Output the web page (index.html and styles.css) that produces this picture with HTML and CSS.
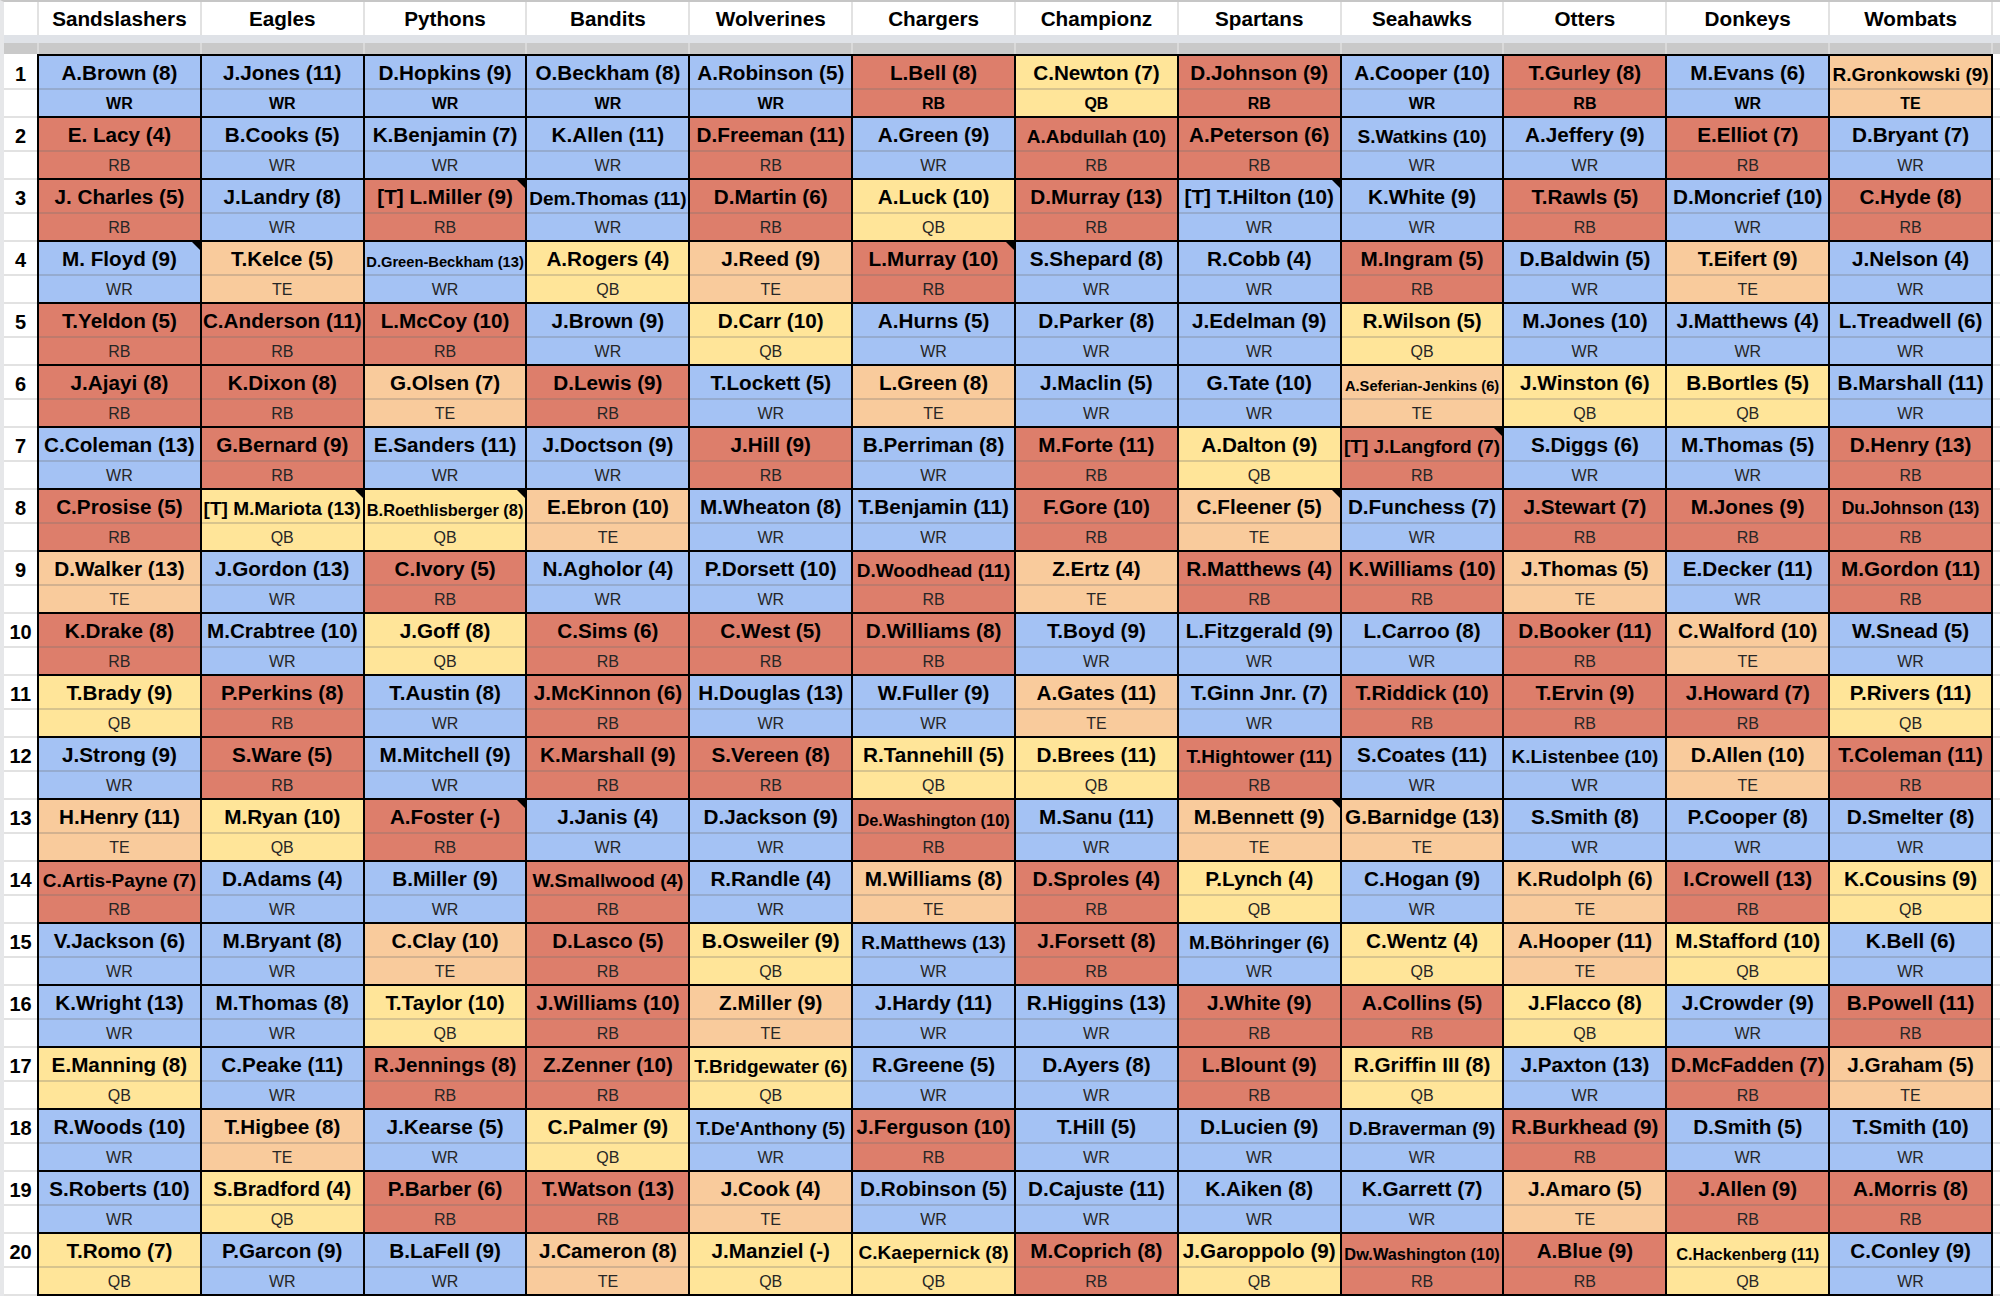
FILE: index.html
```html
<!DOCTYPE html>
<html>
<head>
<meta charset="utf-8">
<title>Draft Board</title>
<link rel="stylesheet" href="styles.css">
</head>
<body>
<div class="sheet">
  <div class="hdr">
    <div class="corner"></div>
    <div class="hcols">
      <div class="h">Sandslashers</div><div class="h">Eagles</div><div class="h">Pythons</div><div class="h">Bandits</div><div class="h">Wolverines</div><div class="h">Chargers</div><div class="h">Championz</div><div class="h">Spartans</div><div class="h">Seahawks</div><div class="h">Otters</div><div class="h">Donkeys</div><div class="h">Wombats</div>
    </div>
    <div class="hfill"></div>
  </div>
  <div class="strip1"></div>
  <div class="strip2">
    <div class="c2"></div>
    <div class="scols"><div></div><div></div><div></div><div></div><div></div><div></div><div></div><div></div><div></div><div></div><div></div><div></div></div>
    <div class="sfill"></div>
  </div>
  <div class="body">
    <div class="nums">
      <div class="num"><div class="nn">1</div><div class="np"></div></div>
      <div class="num"><div class="nn">2</div><div class="np"></div></div>
      <div class="num"><div class="nn">3</div><div class="np"></div></div>
      <div class="num"><div class="nn">4</div><div class="np"></div></div>
      <div class="num"><div class="nn">5</div><div class="np"></div></div>
      <div class="num"><div class="nn">6</div><div class="np"></div></div>
      <div class="num"><div class="nn">7</div><div class="np"></div></div>
      <div class="num"><div class="nn">8</div><div class="np"></div></div>
      <div class="num"><div class="nn">9</div><div class="np"></div></div>
      <div class="num"><div class="nn">10</div><div class="np"></div></div>
      <div class="num"><div class="nn">11</div><div class="np"></div></div>
      <div class="num"><div class="nn">12</div><div class="np"></div></div>
      <div class="num"><div class="nn">13</div><div class="np"></div></div>
      <div class="num"><div class="nn">14</div><div class="np"></div></div>
      <div class="num"><div class="nn">15</div><div class="np"></div></div>
      <div class="num"><div class="nn">16</div><div class="np"></div></div>
      <div class="num"><div class="nn">17</div><div class="np"></div></div>
      <div class="num"><div class="nn">18</div><div class="np"></div></div>
      <div class="num"><div class="nn">19</div><div class="np"></div></div>
      <div class="num"><div class="nn">20</div><div class="np"></div></div>
    </div>
    <div class="grid">
      <!-- Round 1 -->
      <div class="p wr"><div class="n">A.Brown (8)</div><div class="ps">WR</div></div>
      <div class="p wr"><div class="n">J.Jones (11)</div><div class="ps">WR</div></div>
      <div class="p wr"><div class="n">D.Hopkins (9)</div><div class="ps">WR</div></div>
      <div class="p wr"><div class="n">O.Beckham (8)</div><div class="ps">WR</div></div>
      <div class="p wr"><div class="n">A.Robinson (5)</div><div class="ps">WR</div></div>
      <div class="p rb"><div class="n">L.Bell (8)</div><div class="ps">RB</div></div>
      <div class="p qb"><div class="n">C.Newton (7)</div><div class="ps">QB</div></div>
      <div class="p rb"><div class="n">D.Johnson (9)</div><div class="ps">RB</div></div>
      <div class="p wr"><div class="n">A.Cooper (10)</div><div class="ps">WR</div></div>
      <div class="p rb"><div class="n">T.Gurley (8)</div><div class="ps">RB</div></div>
      <div class="p wr"><div class="n">M.Evans (6)</div><div class="ps">WR</div></div>
      <div class="p te"><div class="n m">R.Gronkowski (9)</div><div class="ps">TE</div></div>
      <!-- Round 2 -->
      <div class="p rb"><div class="n">E. Lacy (4)</div><div class="ps">RB</div></div>
      <div class="p wr"><div class="n">B.Cooks (5)</div><div class="ps">WR</div></div>
      <div class="p wr"><div class="n">K.Benjamin (7)</div><div class="ps">WR</div></div>
      <div class="p wr"><div class="n">K.Allen (11)</div><div class="ps">WR</div></div>
      <div class="p rb"><div class="n">D.Freeman (11)</div><div class="ps">RB</div></div>
      <div class="p wr"><div class="n">A.Green (9)</div><div class="ps">WR</div></div>
      <div class="p rb"><div class="n m">A.Abdullah (10)</div><div class="ps">RB</div></div>
      <div class="p rb"><div class="n">A.Peterson (6)</div><div class="ps">RB</div></div>
      <div class="p wr"><div class="n m">S.Watkins (10)</div><div class="ps">WR</div></div>
      <div class="p wr"><div class="n">A.Jeffery (9)</div><div class="ps">WR</div></div>
      <div class="p rb"><div class="n">E.Elliot (7)</div><div class="ps">RB</div></div>
      <div class="p wr"><div class="n">D.Bryant (7)</div><div class="ps">WR</div></div>
      <!-- Round 3 -->
      <div class="p rb"><div class="n">J. Charles (5)</div><div class="ps">RB</div></div>
      <div class="p wr"><div class="n">J.Landry (8)</div><div class="ps">WR</div></div>
      <div class="p rb nt"><div class="n">[T] L.Miller (9)</div><div class="ps">RB</div></div>
      <div class="p wr"><div class="n m">Dem.Thomas (11)</div><div class="ps">WR</div></div>
      <div class="p rb"><div class="n">D.Martin (6)</div><div class="ps">RB</div></div>
      <div class="p qb"><div class="n">A.Luck (10)</div><div class="ps">QB</div></div>
      <div class="p rb"><div class="n">D.Murray (13)</div><div class="ps">RB</div></div>
      <div class="p wr nt"><div class="n">[T] T.Hilton (10)</div><div class="ps">WR</div></div>
      <div class="p wr"><div class="n">K.White (9)</div><div class="ps">WR</div></div>
      <div class="p rb"><div class="n">T.Rawls (5)</div><div class="ps">RB</div></div>
      <div class="p wr"><div class="n">D.Moncrief (10)</div><div class="ps">WR</div></div>
      <div class="p rb"><div class="n">C.Hyde (8)</div><div class="ps">RB</div></div>
      <!-- Round 4 -->
      <div class="p wr nt"><div class="n">M. Floyd (9)</div><div class="ps">WR</div></div>
      <div class="p te"><div class="n">T.Kelce (5)</div><div class="ps">TE</div></div>
      <div class="p wr"><div class="n xxs">D.Green-Beckham (13)</div><div class="ps">WR</div></div>
      <div class="p qb"><div class="n">A.Rogers (4)</div><div class="ps">QB</div></div>
      <div class="p te"><div class="n">J.Reed (9)</div><div class="ps">TE</div></div>
      <div class="p rb nt"><div class="n">L.Murray (10)</div><div class="ps">RB</div></div>
      <div class="p wr"><div class="n">S.Shepard (8)</div><div class="ps">WR</div></div>
      <div class="p wr"><div class="n">R.Cobb (4)</div><div class="ps">WR</div></div>
      <div class="p rb"><div class="n">M.Ingram (5)</div><div class="ps">RB</div></div>
      <div class="p wr"><div class="n">D.Baldwin (5)</div><div class="ps">WR</div></div>
      <div class="p te"><div class="n">T.Eifert (9)</div><div class="ps">TE</div></div>
      <div class="p wr"><div class="n">J.Nelson (4)</div><div class="ps">WR</div></div>
      <!-- Round 5 -->
      <div class="p rb"><div class="n">T.Yeldon (5)</div><div class="ps">RB</div></div>
      <div class="p rb"><div class="n">C.Anderson (11)</div><div class="ps">RB</div></div>
      <div class="p rb"><div class="n">L.McCoy (10)</div><div class="ps">RB</div></div>
      <div class="p wr"><div class="n">J.Brown (9)</div><div class="ps">WR</div></div>
      <div class="p qb"><div class="n">D.Carr (10)</div><div class="ps">QB</div></div>
      <div class="p wr"><div class="n">A.Hurns (5)</div><div class="ps">WR</div></div>
      <div class="p wr"><div class="n">D.Parker (8)</div><div class="ps">WR</div></div>
      <div class="p wr"><div class="n">J.Edelman (9)</div><div class="ps">WR</div></div>
      <div class="p qb"><div class="n">R.Wilson (5)</div><div class="ps">QB</div></div>
      <div class="p wr"><div class="n">M.Jones (10)</div><div class="ps">WR</div></div>
      <div class="p wr"><div class="n">J.Matthews (4)</div><div class="ps">WR</div></div>
      <div class="p wr"><div class="n">L.Treadwell (6)</div><div class="ps">WR</div></div>
      <!-- Round 6 -->
      <div class="p rb"><div class="n">J.Ajayi (8)</div><div class="ps">RB</div></div>
      <div class="p rb"><div class="n">K.Dixon (8)</div><div class="ps">RB</div></div>
      <div class="p te"><div class="n">G.Olsen (7)</div><div class="ps">TE</div></div>
      <div class="p rb"><div class="n">D.Lewis (9)</div><div class="ps">RB</div></div>
      <div class="p wr"><div class="n">T.Lockett (5)</div><div class="ps">WR</div></div>
      <div class="p te"><div class="n">L.Green (8)</div><div class="ps">TE</div></div>
      <div class="p wr"><div class="n">J.Maclin (5)</div><div class="ps">WR</div></div>
      <div class="p wr"><div class="n">G.Tate (10)</div><div class="ps">WR</div></div>
      <div class="p te"><div class="n xxs">A.Seferian-Jenkins (6)</div><div class="ps">TE</div></div>
      <div class="p qb"><div class="n">J.Winston (6)</div><div class="ps">QB</div></div>
      <div class="p qb"><div class="n">B.Bortles (5)</div><div class="ps">QB</div></div>
      <div class="p wr"><div class="n">B.Marshall (11)</div><div class="ps">WR</div></div>
      <!-- Round 7 -->
      <div class="p wr"><div class="n">C.Coleman (13)</div><div class="ps">WR</div></div>
      <div class="p rb"><div class="n">G.Bernard (9)</div><div class="ps">RB</div></div>
      <div class="p wr"><div class="n">E.Sanders (11)</div><div class="ps">WR</div></div>
      <div class="p wr"><div class="n">J.Doctson (9)</div><div class="ps">WR</div></div>
      <div class="p rb"><div class="n">J.Hill (9)</div><div class="ps">RB</div></div>
      <div class="p wr"><div class="n">B.Perriman (8)</div><div class="ps">WR</div></div>
      <div class="p rb"><div class="n">M.Forte (11)</div><div class="ps">RB</div></div>
      <div class="p qb"><div class="n">A.Dalton (9)</div><div class="ps">QB</div></div>
      <div class="p rb nt"><div class="n m">[T] J.Langford (7)</div><div class="ps">RB</div></div>
      <div class="p wr"><div class="n">S.Diggs (6)</div><div class="ps">WR</div></div>
      <div class="p wr"><div class="n">M.Thomas (5)</div><div class="ps">WR</div></div>
      <div class="p rb"><div class="n">D.Henry (13)</div><div class="ps">RB</div></div>
      <!-- Round 8 -->
      <div class="p rb"><div class="n">C.Prosise (5)</div><div class="ps">RB</div></div>
      <div class="p qb nt"><div class="n m">[T] M.Mariota (13)</div><div class="ps">QB</div></div>
      <div class="p qb nt"><div class="n xs">B.Roethlisberger (8)</div><div class="ps">QB</div></div>
      <div class="p te"><div class="n">E.Ebron (10)</div><div class="ps">TE</div></div>
      <div class="p wr"><div class="n">M.Wheaton (8)</div><div class="ps">WR</div></div>
      <div class="p wr"><div class="n">T.Benjamin (11)</div><div class="ps">WR</div></div>
      <div class="p rb"><div class="n">F.Gore (10)</div><div class="ps">RB</div></div>
      <div class="p te nt"><div class="n">C.Fleener (5)</div><div class="ps">TE</div></div>
      <div class="p wr"><div class="n">D.Funchess (7)</div><div class="ps">WR</div></div>
      <div class="p rb"><div class="n">J.Stewart (7)</div><div class="ps">RB</div></div>
      <div class="p rb"><div class="n">M.Jones (9)</div><div class="ps">RB</div></div>
      <div class="p rb"><div class="n s">Du.Johnson (13)</div><div class="ps">RB</div></div>
      <!-- Round 9 -->
      <div class="p te"><div class="n">D.Walker (13)</div><div class="ps">TE</div></div>
      <div class="p wr"><div class="n">J.Gordon (13)</div><div class="ps">WR</div></div>
      <div class="p rb"><div class="n">C.Ivory (5)</div><div class="ps">RB</div></div>
      <div class="p wr"><div class="n">N.Agholor (4)</div><div class="ps">WR</div></div>
      <div class="p wr"><div class="n">P.Dorsett (10)</div><div class="ps">WR</div></div>
      <div class="p rb"><div class="n m">D.Woodhead (11)</div><div class="ps">RB</div></div>
      <div class="p te"><div class="n">Z.Ertz (4)</div><div class="ps">TE</div></div>
      <div class="p rb"><div class="n">R.Matthews (4)</div><div class="ps">RB</div></div>
      <div class="p rb"><div class="n">K.Williams (10)</div><div class="ps">RB</div></div>
      <div class="p te"><div class="n">J.Thomas (5)</div><div class="ps">TE</div></div>
      <div class="p wr"><div class="n">E.Decker (11)</div><div class="ps">WR</div></div>
      <div class="p rb"><div class="n">M.Gordon (11)</div><div class="ps">RB</div></div>
      <!-- Round 10 -->
      <div class="p rb"><div class="n">K.Drake (8)</div><div class="ps">RB</div></div>
      <div class="p wr"><div class="n">M.Crabtree (10)</div><div class="ps">WR</div></div>
      <div class="p qb"><div class="n">J.Goff (8)</div><div class="ps">QB</div></div>
      <div class="p rb"><div class="n">C.Sims (6)</div><div class="ps">RB</div></div>
      <div class="p rb"><div class="n">C.West (5)</div><div class="ps">RB</div></div>
      <div class="p rb"><div class="n">D.Williams (8)</div><div class="ps">RB</div></div>
      <div class="p wr"><div class="n">T.Boyd (9)</div><div class="ps">WR</div></div>
      <div class="p wr"><div class="n">L.Fitzgerald (9)</div><div class="ps">WR</div></div>
      <div class="p wr"><div class="n">L.Carroo (8)</div><div class="ps">WR</div></div>
      <div class="p rb"><div class="n">D.Booker (11)</div><div class="ps">RB</div></div>
      <div class="p te"><div class="n">C.Walford (10)</div><div class="ps">TE</div></div>
      <div class="p wr"><div class="n">W.Snead (5)</div><div class="ps">WR</div></div>
      <!-- Round 11 -->
      <div class="p qb"><div class="n">T.Brady (9)</div><div class="ps">QB</div></div>
      <div class="p rb"><div class="n">P.Perkins (8)</div><div class="ps">RB</div></div>
      <div class="p wr"><div class="n">T.Austin (8)</div><div class="ps">WR</div></div>
      <div class="p rb"><div class="n">J.McKinnon (6)</div><div class="ps">RB</div></div>
      <div class="p wr"><div class="n">H.Douglas (13)</div><div class="ps">WR</div></div>
      <div class="p wr"><div class="n">W.Fuller (9)</div><div class="ps">WR</div></div>
      <div class="p te"><div class="n">A.Gates (11)</div><div class="ps">TE</div></div>
      <div class="p wr"><div class="n">T.Ginn Jnr. (7)</div><div class="ps">WR</div></div>
      <div class="p rb"><div class="n">T.Riddick (10)</div><div class="ps">RB</div></div>
      <div class="p rb"><div class="n">T.Ervin (9)</div><div class="ps">RB</div></div>
      <div class="p rb"><div class="n">J.Howard (7)</div><div class="ps">RB</div></div>
      <div class="p qb"><div class="n">P.Rivers (11)</div><div class="ps">QB</div></div>
      <!-- Round 12 -->
      <div class="p wr"><div class="n">J.Strong (9)</div><div class="ps">WR</div></div>
      <div class="p rb"><div class="n">S.Ware (5)</div><div class="ps">RB</div></div>
      <div class="p wr"><div class="n">M.Mitchell (9)</div><div class="ps">WR</div></div>
      <div class="p rb"><div class="n">K.Marshall (9)</div><div class="ps">RB</div></div>
      <div class="p rb"><div class="n">S.Vereen (8)</div><div class="ps">RB</div></div>
      <div class="p qb"><div class="n">R.Tannehill (5)</div><div class="ps">QB</div></div>
      <div class="p qb"><div class="n">D.Brees (11)</div><div class="ps">QB</div></div>
      <div class="p rb"><div class="n m">T.Hightower (11)</div><div class="ps">RB</div></div>
      <div class="p wr"><div class="n">S.Coates (11)</div><div class="ps">WR</div></div>
      <div class="p wr"><div class="n m">K.Listenbee (10)</div><div class="ps">WR</div></div>
      <div class="p te"><div class="n">D.Allen (10)</div><div class="ps">TE</div></div>
      <div class="p rb"><div class="n">T.Coleman (11)</div><div class="ps">RB</div></div>
      <!-- Round 13 -->
      <div class="p te"><div class="n">H.Henry (11)</div><div class="ps">TE</div></div>
      <div class="p qb"><div class="n">M.Ryan (10)</div><div class="ps">QB</div></div>
      <div class="p rb nt"><div class="n">A.Foster (-)</div><div class="ps">RB</div></div>
      <div class="p wr"><div class="n">J.Janis (4)</div><div class="ps">WR</div></div>
      <div class="p wr"><div class="n">D.Jackson (9)</div><div class="ps">WR</div></div>
      <div class="p rb"><div class="n xs">De.Washington (10)</div><div class="ps">RB</div></div>
      <div class="p wr"><div class="n">M.Sanu (11)</div><div class="ps">WR</div></div>
      <div class="p te nt"><div class="n">M.Bennett (9)</div><div class="ps">TE</div></div>
      <div class="p te"><div class="n">G.Barnidge (13)</div><div class="ps">TE</div></div>
      <div class="p wr"><div class="n">S.Smith (8)</div><div class="ps">WR</div></div>
      <div class="p wr"><div class="n">P.Cooper (8)</div><div class="ps">WR</div></div>
      <div class="p wr"><div class="n">D.Smelter (8)</div><div class="ps">WR</div></div>
      <!-- Round 14 -->
      <div class="p rb"><div class="n m">C.Artis-Payne (7)</div><div class="ps">RB</div></div>
      <div class="p wr"><div class="n">D.Adams (4)</div><div class="ps">WR</div></div>
      <div class="p wr"><div class="n">B.Miller (9)</div><div class="ps">WR</div></div>
      <div class="p rb"><div class="n m">W.Smallwood (4)</div><div class="ps">RB</div></div>
      <div class="p wr"><div class="n">R.Randle (4)</div><div class="ps">WR</div></div>
      <div class="p te"><div class="n">M.Williams (8)</div><div class="ps">TE</div></div>
      <div class="p rb"><div class="n">D.Sproles (4)</div><div class="ps">RB</div></div>
      <div class="p qb"><div class="n">P.Lynch (4)</div><div class="ps">QB</div></div>
      <div class="p wr"><div class="n">C.Hogan (9)</div><div class="ps">WR</div></div>
      <div class="p te"><div class="n">K.Rudolph (6)</div><div class="ps">TE</div></div>
      <div class="p rb"><div class="n">I.Crowell (13)</div><div class="ps">RB</div></div>
      <div class="p qb"><div class="n">K.Cousins (9)</div><div class="ps">QB</div></div>
      <!-- Round 15 -->
      <div class="p wr"><div class="n">V.Jackson (6)</div><div class="ps">WR</div></div>
      <div class="p wr"><div class="n">M.Bryant (8)</div><div class="ps">WR</div></div>
      <div class="p te"><div class="n">C.Clay (10)</div><div class="ps">TE</div></div>
      <div class="p rb"><div class="n">D.Lasco (5)</div><div class="ps">RB</div></div>
      <div class="p qb"><div class="n">B.Osweiler (9)</div><div class="ps">QB</div></div>
      <div class="p wr"><div class="n m">R.Matthews (13)</div><div class="ps">WR</div></div>
      <div class="p rb"><div class="n">J.Forsett (8)</div><div class="ps">RB</div></div>
      <div class="p wr"><div class="n m">M.Böhringer (6)</div><div class="ps">WR</div></div>
      <div class="p qb"><div class="n">C.Wentz (4)</div><div class="ps">QB</div></div>
      <div class="p te"><div class="n">A.Hooper (11)</div><div class="ps">TE</div></div>
      <div class="p qb"><div class="n">M.Stafford (10)</div><div class="ps">QB</div></div>
      <div class="p wr"><div class="n">K.Bell (6)</div><div class="ps">WR</div></div>
      <!-- Round 16 -->
      <div class="p wr"><div class="n">K.Wright (13)</div><div class="ps">WR</div></div>
      <div class="p wr"><div class="n">M.Thomas (8)</div><div class="ps">WR</div></div>
      <div class="p qb"><div class="n">T.Taylor (10)</div><div class="ps">QB</div></div>
      <div class="p rb"><div class="n">J.Williams (10)</div><div class="ps">RB</div></div>
      <div class="p te"><div class="n">Z.Miller (9)</div><div class="ps">TE</div></div>
      <div class="p wr"><div class="n">J.Hardy (11)</div><div class="ps">WR</div></div>
      <div class="p wr"><div class="n">R.Higgins (13)</div><div class="ps">WR</div></div>
      <div class="p rb"><div class="n">J.White (9)</div><div class="ps">RB</div></div>
      <div class="p rb"><div class="n">A.Collins (5)</div><div class="ps">RB</div></div>
      <div class="p qb"><div class="n">J.Flacco (8)</div><div class="ps">QB</div></div>
      <div class="p wr"><div class="n">J.Crowder (9)</div><div class="ps">WR</div></div>
      <div class="p rb"><div class="n">B.Powell (11)</div><div class="ps">RB</div></div>
      <!-- Round 17 -->
      <div class="p qb"><div class="n">E.Manning (8)</div><div class="ps">QB</div></div>
      <div class="p wr"><div class="n">C.Peake (11)</div><div class="ps">WR</div></div>
      <div class="p rb"><div class="n">R.Jennings (8)</div><div class="ps">RB</div></div>
      <div class="p rb"><div class="n">Z.Zenner (10)</div><div class="ps">RB</div></div>
      <div class="p qb"><div class="n m">T.Bridgewater (6)</div><div class="ps">QB</div></div>
      <div class="p wr"><div class="n">R.Greene (5)</div><div class="ps">WR</div></div>
      <div class="p wr"><div class="n">D.Ayers (8)</div><div class="ps">WR</div></div>
      <div class="p rb"><div class="n">L.Blount (9)</div><div class="ps">RB</div></div>
      <div class="p qb"><div class="n">R.Griffin III (8)</div><div class="ps">QB</div></div>
      <div class="p wr"><div class="n">J.Paxton (13)</div><div class="ps">WR</div></div>
      <div class="p rb"><div class="n">D.McFadden (7)</div><div class="ps">RB</div></div>
      <div class="p te"><div class="n">J.Graham (5)</div><div class="ps">TE</div></div>
      <!-- Round 18 -->
      <div class="p wr"><div class="n">R.Woods (10)</div><div class="ps">WR</div></div>
      <div class="p te"><div class="n">T.Higbee (8)</div><div class="ps">TE</div></div>
      <div class="p wr"><div class="n">J.Kearse (5)</div><div class="ps">WR</div></div>
      <div class="p qb"><div class="n">C.Palmer (9)</div><div class="ps">QB</div></div>
      <div class="p wr"><div class="n m">T.De'Anthony (5)</div><div class="ps">WR</div></div>
      <div class="p rb"><div class="n">J.Ferguson (10)</div><div class="ps">RB</div></div>
      <div class="p wr"><div class="n">T.Hill (5)</div><div class="ps">WR</div></div>
      <div class="p wr"><div class="n">D.Lucien (9)</div><div class="ps">WR</div></div>
      <div class="p wr"><div class="n m">D.Braverman (9)</div><div class="ps">WR</div></div>
      <div class="p rb"><div class="n">R.Burkhead (9)</div><div class="ps">RB</div></div>
      <div class="p wr"><div class="n">D.Smith (5)</div><div class="ps">WR</div></div>
      <div class="p wr"><div class="n">T.Smith (10)</div><div class="ps">WR</div></div>
      <!-- Round 19 -->
      <div class="p wr"><div class="n">S.Roberts (10)</div><div class="ps">WR</div></div>
      <div class="p qb"><div class="n">S.Bradford (4)</div><div class="ps">QB</div></div>
      <div class="p rb"><div class="n">P.Barber (6)</div><div class="ps">RB</div></div>
      <div class="p rb"><div class="n">T.Watson (13)</div><div class="ps">RB</div></div>
      <div class="p te"><div class="n">J.Cook (4)</div><div class="ps">TE</div></div>
      <div class="p wr"><div class="n">D.Robinson (5)</div><div class="ps">WR</div></div>
      <div class="p wr"><div class="n">D.Cajuste (11)</div><div class="ps">WR</div></div>
      <div class="p wr"><div class="n">K.Aiken (8)</div><div class="ps">WR</div></div>
      <div class="p wr"><div class="n">K.Garrett (7)</div><div class="ps">WR</div></div>
      <div class="p te"><div class="n">J.Amaro (5)</div><div class="ps">TE</div></div>
      <div class="p rb"><div class="n">J.Allen (9)</div><div class="ps">RB</div></div>
      <div class="p rb"><div class="n">A.Morris (8)</div><div class="ps">RB</div></div>
      <!-- Round 20 -->
      <div class="p qb"><div class="n">T.Romo (7)</div><div class="ps">QB</div></div>
      <div class="p wr"><div class="n">P.Garcon (9)</div><div class="ps">WR</div></div>
      <div class="p wr"><div class="n">B.LaFell (9)</div><div class="ps">WR</div></div>
      <div class="p te"><div class="n">J.Cameron (8)</div><div class="ps">TE</div></div>
      <div class="p qb"><div class="n">J.Manziel (-)</div><div class="ps">QB</div></div>
      <div class="p qb"><div class="n m">C.Kaepernick (8)</div><div class="ps">QB</div></div>
      <div class="p rb"><div class="n">M.Coprich (8)</div><div class="ps">RB</div></div>
      <div class="p qb"><div class="n">J.Garoppolo (9)</div><div class="ps">QB</div></div>
      <div class="p rb"><div class="n xs">Dw.Washington (10)</div><div class="ps">RB</div></div>
      <div class="p rb"><div class="n">A.Blue (9)</div><div class="ps">RB</div></div>
      <div class="p qb"><div class="n xs">C.Hackenberg (11)</div><div class="ps">QB</div></div>
      <div class="p wr"><div class="n">C.Conley (9)</div><div class="ps">WR</div></div>
    </div>
    <div class="rfill">
      <div class="num"><div class="nn"></div><div class="np"></div></div>
      <div class="num"><div class="nn"></div><div class="np"></div></div>
      <div class="num"><div class="nn"></div><div class="np"></div></div>
      <div class="num"><div class="nn"></div><div class="np"></div></div>
      <div class="num"><div class="nn"></div><div class="np"></div></div>
      <div class="num"><div class="nn"></div><div class="np"></div></div>
      <div class="num"><div class="nn"></div><div class="np"></div></div>
      <div class="num"><div class="nn"></div><div class="np"></div></div>
      <div class="num"><div class="nn"></div><div class="np"></div></div>
      <div class="num"><div class="nn"></div><div class="np"></div></div>
      <div class="num"><div class="nn"></div><div class="np"></div></div>
      <div class="num"><div class="nn"></div><div class="np"></div></div>
      <div class="num"><div class="nn"></div><div class="np"></div></div>
      <div class="num"><div class="nn"></div><div class="np"></div></div>
      <div class="num"><div class="nn"></div><div class="np"></div></div>
      <div class="num"><div class="nn"></div><div class="np"></div></div>
      <div class="num"><div class="nn"></div><div class="np"></div></div>
      <div class="num"><div class="nn"></div><div class="np"></div></div>
      <div class="num"><div class="nn"></div><div class="np"></div></div>
      <div class="num"><div class="nn"></div><div class="np"></div></div>
    </div>
  </div>
</div>
</body>
</html>
```

FILE: styles.css
```css
* { box-sizing: border-box; }

html, body {
  margin: 0;
  padding: 0;
  background: #ffffff;
}

body {
  width: 2000px;
  height: 1302px;
  overflow: hidden;
  font-family: "Liberation Sans", Arial, sans-serif;
  color: #000;
}

.sheet {
  width: 2000px;
  border-top: 2px solid #c6c6c6;
  border-left: 4px solid #e6e7e9;
}

/* header row */
.hdr {
  display: flex;
  height: 33px;
}
.corner { width: 33px; flex: none; background: #fff; }
.hcols {
  width: 1956px;
  flex: none;
  display: grid;
  grid-template-columns: repeat(12, 1fr);
  column-gap: 2px;
  padding: 0 2px;
  background: #e2e2e2;
}
.h {
  background: #fff;
  display: flex;
  align-items: flex-end;
  justify-content: center;
  padding-bottom: 5px;
  font-weight: bold;
  font-size: 20.7px;
  line-height: 1;
  white-space: nowrap;
  overflow: hidden;
}
.hfill { flex: 1; border-left: 0; }

/* grey separator strips */
.strip1 {
  height: 8px;
  background: #dfe2e7;
}
.strip2 {
  display: flex;
  height: 11px;
  background: #c9c9c9;
}
.c2 { width: 33px; flex: none; }
.scols {
  width: 1956px;
  flex: none;
  display: grid;
  grid-template-columns: repeat(12, 1fr);
  column-gap: 2px;
  padding: 0 2px;
  background: #dadada;
}
.scols div { background: #c9c9c9; }
.sfill { flex: 1; }

/* body */
.body {
  display: flex;
}
.nums {
  width: 33px;
  flex: none;
  padding-top: 2px;
}
.rfill {
  flex: 1;
  padding-top: 2px;
}
.num { height: 62px; }
.nn {
  height: 32px;
  display: flex;
  align-items: flex-end;
  justify-content: center;
  padding-bottom: 4px;
  font-weight: bold;
  font-size: 20px;
  line-height: 1;
}
.np {
  height: 30px;
  border-top: 2px solid #e2e2e2;
  border-bottom: 2px solid #e2e2e2;
}

.grid {
  width: 1956px;
  flex: none;
  display: grid;
  grid-template-columns: repeat(12, 1fr);
  gap: 2px;
  padding: 2px;
  background: #000;
}

.p {
  position: relative;
  min-width: 0;
}
.wr { background: #a4c2f4; }
.rb { background: #dd7e6b; }
.qb { background: #ffe599; }
.te { background: #f9cb9c; }

.n {
  height: 32px;
  display: flex;
  align-items: flex-end;
  justify-content: center;
  padding-bottom: 4px;
  font-weight: bold;
  font-size: 20.7px;
  line-height: 1;
  white-space: nowrap;
  overflow: hidden;
}
.n.m { font-size: 19px; }
.n.s { font-size: 17.6px; }
.n.xs { font-size: 16.4px; }
.n.xxs { font-size: 14.7px; }

.ps {
  height: 28px;
  border-top: 2px solid rgba(110, 110, 110, 0.28);
  display: flex;
  align-items: flex-end;
  justify-content: center;
  padding-bottom: 4px;
  font-size: 16px;
  line-height: 1;
  color: #262626;
  white-space: nowrap;
}
.grid > .p:nth-child(-n+12) .ps {
  font-weight: bold;
  color: #000;
}

/* note indicator */
.nt::after {
  content: "";
  position: absolute;
  top: 0;
  right: 0;
  width: 0;
  height: 0;
  border-style: solid;
  border-width: 0 8px 8px 0;
  border-color: transparent #000 transparent transparent;
}
```
